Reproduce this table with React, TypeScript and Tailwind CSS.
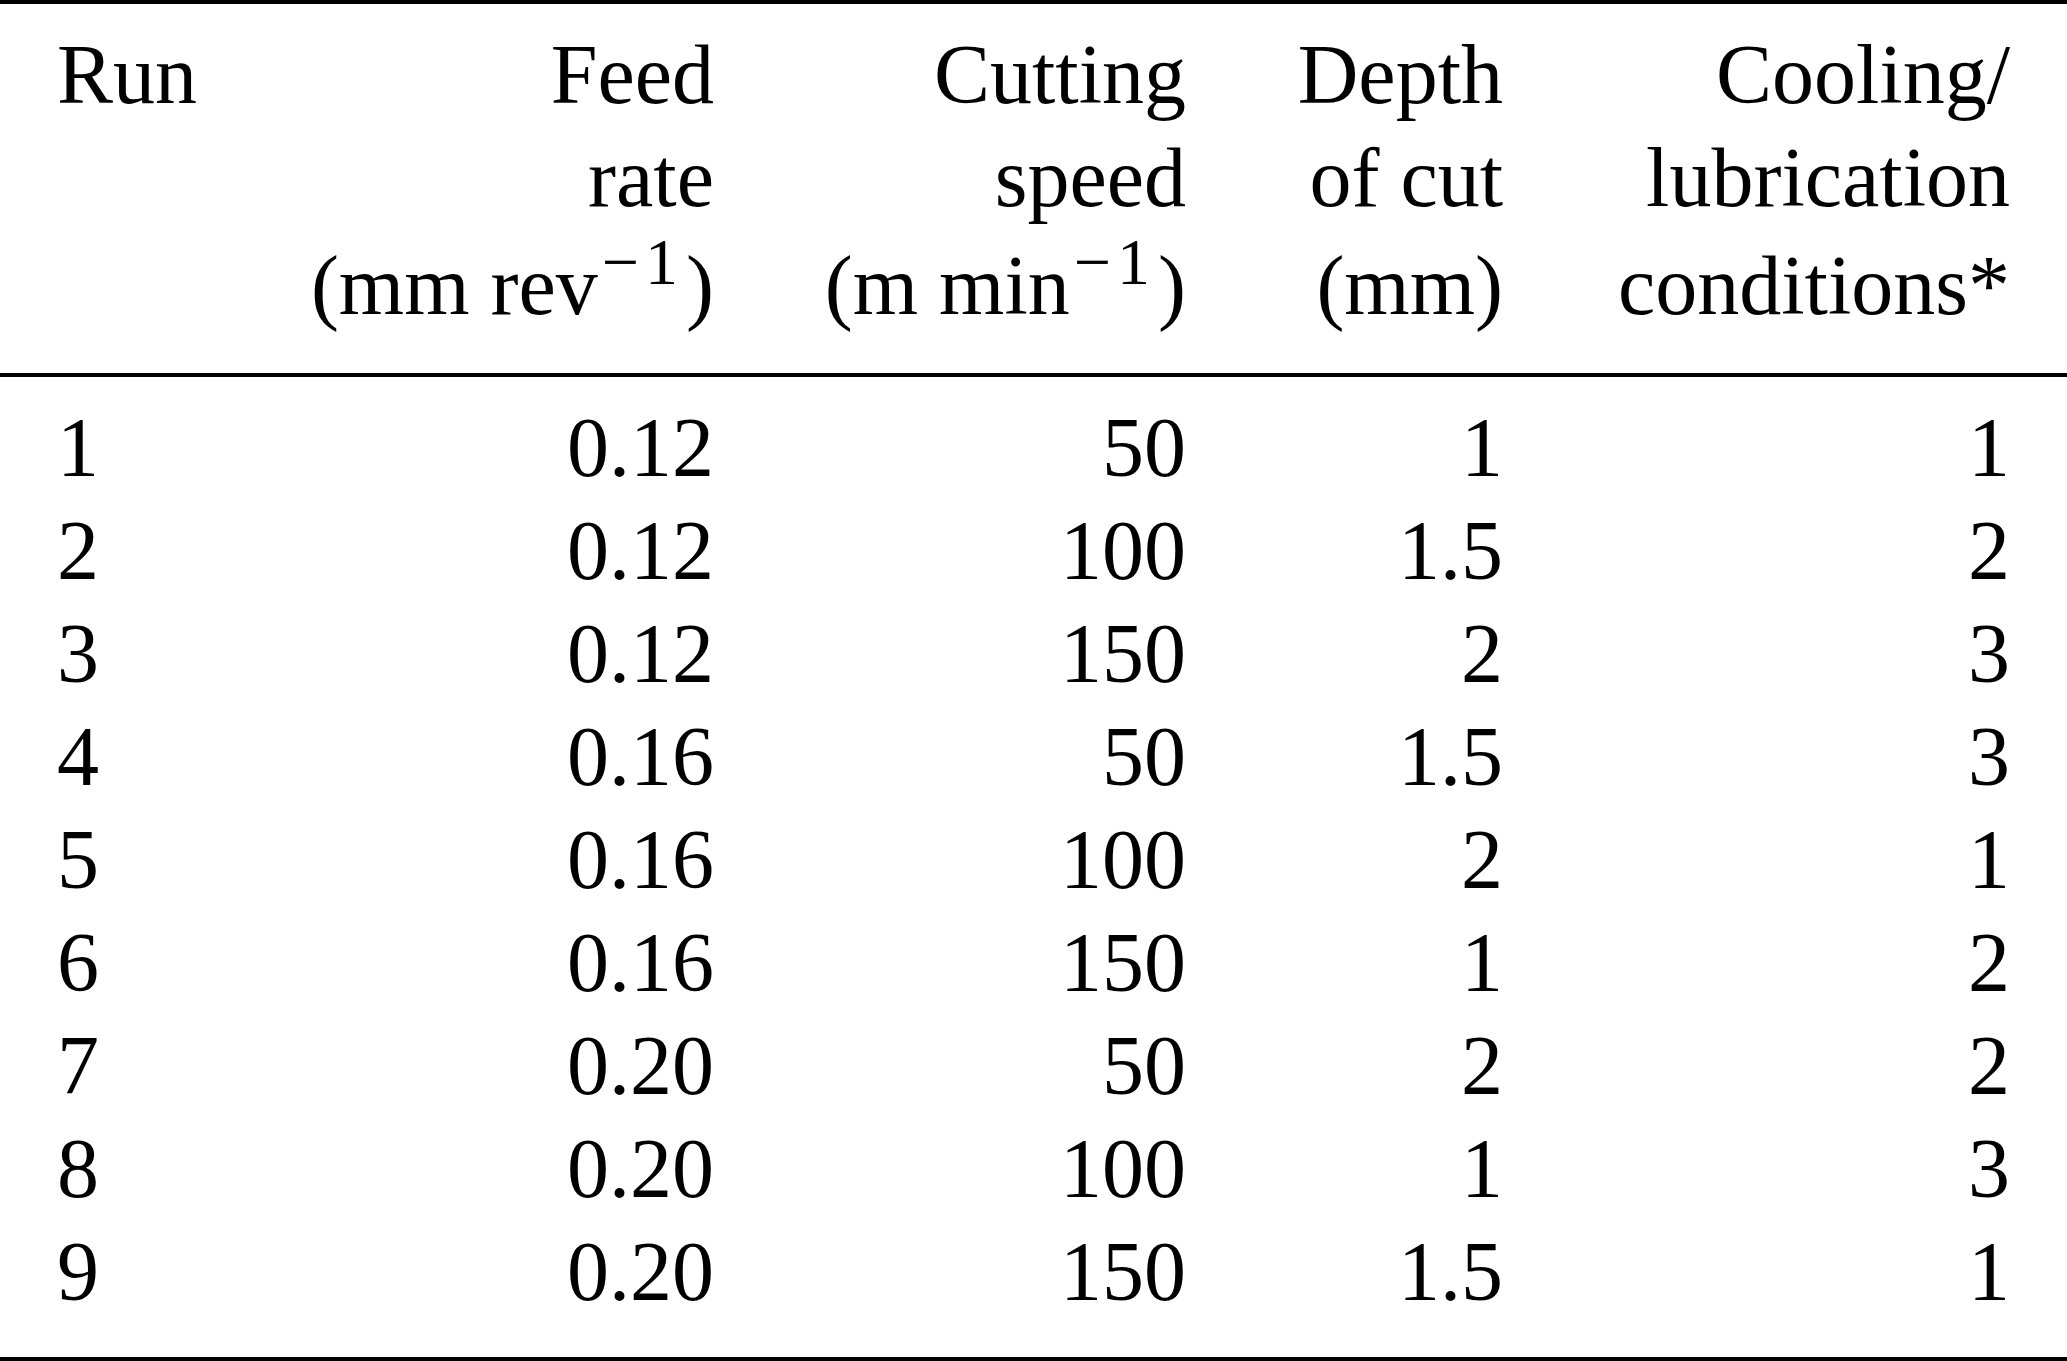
const rows: [string, string, string, string, string][] = [
  ['1', '0.12', '50', '1', '1'],
  ['2', '0.12', '100', '1.5', '2'],
  ['3', '0.12', '150', '2', '3'],
  ['4', '0.16', '50', '1.5', '3'],
  ['5', '0.16', '100', '2', '1'],
  ['6', '0.16', '150', '1', '2'],
  ['7', '0.20', '50', '2', '2'],
  ['8', '0.20', '100', '1', '3'],
  ['9', '0.20', '150', '1.5', '1'],
];

const cols = 'grid grid-cols-[200px_457px_472px_317px_507px]';

function Unit({ pre, sup, post }: { pre: string; sup?: string; post: string }) {
  return (
    <>
      {pre}
      {sup && (
        <span className="relative -top-[30px] ml-[4px] text-[66px] leading-none">
          −<span className="ml-[6px]">{sup}</span>
        </span>
      )}
      <span className={sup ? 'ml-[8px]' : ''}>{post}</span>
    </>
  );
}

function HeadCell({ lines }: { lines: React.ReactNode[] }) {
  return (
    <div className="text-right">
      {lines.map((l, i) => (
        <div key={i} className={i === 2 ? 'pt-[5px]' : ''}>{l}</div>
      ))}
    </div>
  );
}

export default function App() {
  return (
    <div className="min-h-screen w-[2067px] bg-white text-black font-['Liberation_Serif','Times_New_Roman',serif] text-[84px] leading-[103px]">
      <div className="border-t-4 border-black" />

      {/* header */}
      <div className={`${cols} px-[57px] pt-[19px] pb-[36px]`}>
        <div className="text-left">Run</div>
        <HeadCell lines={['Feed', 'rate', <Unit key="u" pre="(mm rev" sup="1" post=")" />]} />
        <HeadCell lines={['Cutting', 'speed', <Unit key="u" pre="(m min" sup="1" post=")" />]} />
        <HeadCell lines={['Depth', 'of cut', '(mm)']} />
        <HeadCell lines={['Cooling/', 'lubrication', 'conditions*']} />
      </div>

      <div className="border-t-4 border-black" />

      {/* body */}
      <div className="px-[57px] pt-[19px] pb-[34px]">
        {rows.map(r => (
          <div key={r[0]} className={cols}>
            <div className="text-left">{r[0]}</div>
            <div className="text-right">{r[1]}</div>
            <div className="text-right">{r[2]}</div>
            <div className="text-right">{r[3]}</div>
            <div className="text-right">{r[4]}</div>
          </div>
        ))}
      </div>

      <div className="border-t-4 border-black" />
    </div>
  );
}
